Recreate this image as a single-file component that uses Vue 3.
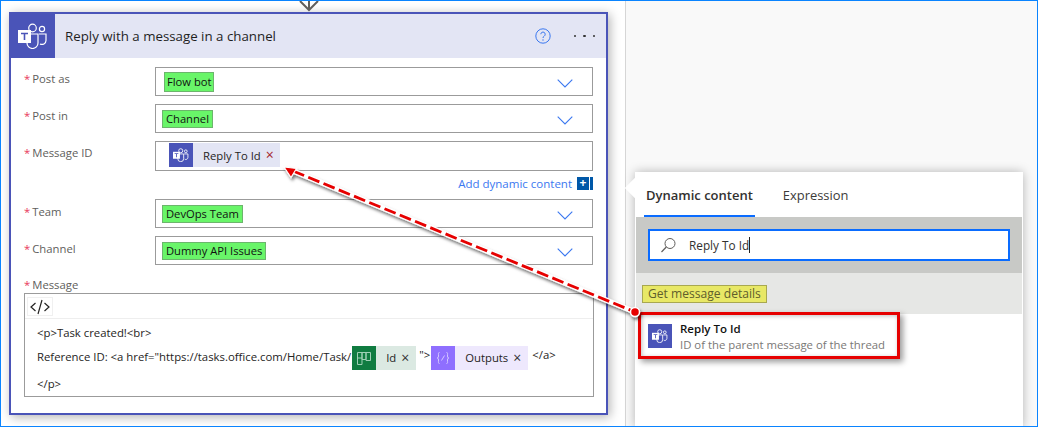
<script setup>
const rowsTop = [
  { label: 'Post as', token: 'Flow bot', cls: 'tk-a' },
  { label: 'Post in', token: 'Channel', cls: 'tk-b' }
]
const rowsBottom = [
  { label: 'Team', token: 'DevOps Team', cls: 'tk-b' },
  { label: 'Channel', token: 'Dummy API Issues', cls: 'tk-b' }
]
</script>

<template>
  <div class="frame">
    <section class="canvas">
      <svg class="connector" width="22" height="11" viewBox="0 0 22 11">
        <path d="M2 0l9 9 9-9M11 0v9" fill="none" stroke="#605e5c" stroke-width="2" />
      </svg>
      <article class="card">
        <header class="card-head">
          <div class="head-icon">
            <svg width="30" height="26" viewBox="0 0 30 26">
              <circle cx="14.5" cy="5" r="3.8" fill="none" stroke="#fff" stroke-width="1.2" />
              <circle cx="24" cy="6" r="2.6" fill="none" stroke="#fff" stroke-width="1.2" />
              <path d="M9 11h11v9a5.5 5.5 0 0 1-11 0zM21 11h7v6.5a4 4 0 0 1-6 3.4" fill="none" stroke="#fff" stroke-width="1.2" />
              <rect x="0" y="7" width="13" height="13" fill="#fff" />
              <path d="M3 9.8h7v1.5H7.3V17H5.7v-5.7H3z" fill="#4a54b8" />
            </svg>
          </div>
          <h1 class="head-title">Reply with a message in a channel</h1>
          <svg class="help" width="16" height="16" viewBox="0 0 16 16">
            <circle cx="8" cy="8" r="7.2" fill="none" stroke="#3b78f0" stroke-width="1" />
            <path d="M5.8 6.2a2.2 2.2 0 1 1 3.4 1.9c-.8.5-1.2.9-1.2 1.9" fill="none" stroke="#3b78f0" stroke-width="1" />
            <circle cx="8" cy="12" r=".7" fill="#3b78f0" />
          </svg>
          <div class="dots"><i></i><i></i><i></i></div>
        </header>

        <div class="form">
          <div v-for="r in rowsTop" :key="r.label" class="row">
            <label class="lbl"><b>*</b>{{ r.label }}</label>
            <div class="field">
              <span class="hl" :class="r.cls">{{ r.token }}</span>
              <svg class="chev" width="16" height="9" viewBox="0 0 16 9"><path d="M.7.7L8 8l7.3-7.3" fill="none" stroke="#3b78f0" stroke-width="1.1" /></svg>
            </div>
          </div>

          <div class="row row-id">
            <label class="lbl"><b>*</b>Message ID</label>
            <div class="field field-id">
              <span class="chip chip-teams">
                <span class="chip-ico teams">
                  <svg width="16" height="14" viewBox="0 0 30 26">
                    <circle cx="14.5" cy="5" r="3.8" fill="none" stroke="#fff" stroke-width="1.6" />
                    <circle cx="24" cy="6" r="2.6" fill="none" stroke="#fff" stroke-width="1.6" />
                    <path d="M9 11h11v9a5.5 5.5 0 0 1-11 0zM21 11h7v6.5a4 4 0 0 1-6 3.4" fill="none" stroke="#fff" stroke-width="1.6" />
                    <rect x="0" y="7" width="13" height="13" fill="#fff" />
                    <path d="M3 9.8h7v1.5H7.3V17H5.7v-5.7H3z" fill="#4a54b8" />
                  </svg>
                </span>
                <span class="chip-text">Reply To Id</span>
                <span class="chip-x x-red">×</span>
              </span>
            </div>
          </div>

          <div class="add-row">
            <span class="add-link">Add dynamic content</span>
            <span class="add-btn">+</span>
            <span class="add-strip"></span>
          </div>

          <div v-for="r in rowsBottom" :key="r.label" class="row row-low">
            <label class="lbl"><b>*</b>{{ r.label }}</label>
            <div class="field">
              <span class="hl" :class="r.cls">{{ r.token }}</span>
              <svg class="chev" width="16" height="9" viewBox="0 0 16 9"><path d="M.7.7L8 8l7.3-7.3" fill="none" stroke="#3b78f0" stroke-width="1.1" /></svg>
            </div>
          </div>

          <label class="lbl lbl-msg"><b>*</b>Message</label>
          <div class="editor">
            <div class="toolbar">
              <span class="code-btn">
                <svg width="22" height="16" viewBox="0 0 22 16">
                  <path d="M6.5 4L2 8l4.5 4M15.5 4L20 8l-4.5 4M13 1L9 15" fill="none" stroke="#252423" stroke-width="1.2" />
                </svg>
              </span>
            </div>
            <div class="code">
              <p class="ln ln1">&lt;p&gt;Task created!&lt;br&gt;</p>
              <div class="ln ln2">
                <span class="ref">Reference ID: &lt;a href="https://tasks.office.com/Home/Task/</span>
                <span class="chip chip-planner">
                  <span class="chip-ico planner">
                    <svg width="14" height="14" viewBox="0 0 14 14">
                      <path d="M.5 1.5h4.5v12H.5zM5 1.5h4v7H5zM9 1.5h4.500v8H9zM.5 7h4.500" fill="none" stroke="#9fd0b6" stroke-width="1" />
                    </svg>
                  </span>
                  <span class="chip-text">Id</span>
                  <span class="chip-x">×</span>
                </span>
                <span class="quote">"&gt;</span>
                <span class="chip chip-expr">
                  <span class="chip-ico expr">
                    <svg width="14" height="14" viewBox="0 0 14 14">
                      <path d="M3.500 1.500C2 1.500 2.500 3 2.500 5S1.500 7 1 7c.5 0 1.500 0 1.500 2s-.5 3.500 1 3.500M10.500 1.500c1.500 0 1 1.500 1 3.500s1 2 1.500 2c-.5 0-1.500 0-1.500 2s.5 3.500-1 3.500M5.500 9.500L8.500 4.500" fill="none" stroke="#d5c8ff" stroke-width="1" />
                    </svg>
                  </span>
                  <span class="chip-text">Outputs</span>
                  <span class="chip-x">×</span>
                </span>
                <span class="close-a">&lt;/a&gt;</span>
              </div>
              <p class="ln ln3">&lt;/p&gt;</p>
            </div>
          </div>
        </div>
      </article>
    </section>

    <aside class="side">
      <div class="flyout">
        <span class="beak"></span>
        <nav class="tabs">
          <span class="tab active">Dynamic content</span>
          <span class="tab">Expression</span>
        </nav>
        <div class="search-band">
          <div class="search">
            <svg width="17" height="17" viewBox="0 0 17 17">
              <circle cx="10" cy="6.500" r="5" fill="none" stroke="#605e5c" stroke-width="1" />
              <path d="M6.300 10L1.500 15" stroke="#605e5c" stroke-width="1.200" />
            </svg>
            <span class="search-text">Reply To Id</span>
            <span class="caret"></span>
          </div>
        </div>
        <div class="group-band"><span class="group-tag">Get message details</span></div>
        <div class="result">
          <span class="chip-ico teams">
            <svg width="16" height="14" viewBox="0 0 30 26">
              <circle cx="14.5" cy="5" r="3.800" fill="none" stroke="#fff" stroke-width="1.600" />
              <circle cx="24" cy="6" r="2.600" fill="none" stroke="#fff" stroke-width="1.600" />
              <path d="M9 11h11v9a5.500 5.500 0 0 1-11 0zM21 11h7v6.500a4 4 0 0 1-6 3.400" fill="none" stroke="#fff" stroke-width="1.600" />
              <rect x="0" y="7" width="13" height="13" fill="#fff" />
              <path d="M3 9.800h7v1.500H7.300V17H5.700v-5.700H3z" fill="#4a54b8" />
            </svg>
          </span>
          <div class="result-text">
            <strong>Reply To Id</strong>
            <small>ID of the parent message of the thread</small>
          </div>
        </div>
      </div>
    </aside>

    <div class="red-box"></div>
    <svg class="annot" width="1038" height="427" viewBox="0 0 1038 427">
      <defs>
        <filter id="sh" x="-5%" y="-20%" width="110%" height="140%">
          <feDropShadow dx="1.500" dy="2.500" stdDeviation="1.800" flood-color="#000" flood-opacity=".55" />
        </filter>
      </defs>
      <g filter="url(#sh)">
        <path d="M292 170.500L635 312" stroke="#fff" stroke-width="5.500" />
        <path d="M293 171L635 312" stroke="#e60000" stroke-width="2.800" stroke-dasharray="12 4.500" />
        <path d="M284 167L296.500 168.500L291 177.500z" fill="#e60000" stroke="#fff" stroke-width="1.200" />
        <circle cx="635" cy="312" r="4.500" fill="#e60000" stroke="#fff" stroke-width="1.500" />
      </g>
    </svg>
  </div>
</template>

<style>
html, body { margin: 0; padding: 0; }
</style>

<style scoped>
.frame {
  position: relative;
  display: flex;
  box-sizing: border-box;
  width: 1038px;
  height: 427px;
  overflow: hidden;
  background: #fff;
  border: 1px solid #0a84ff;
  font-family: "Open Sans", "Noto Sans", sans-serif;
  color: #252423;
}
.canvas {
  position: relative;
  box-sizing: border-box;
  width: 625px;
  padding: 11px 0 0 8px;
  border-right: 1px solid #d6d6d6;
  background: #fff;
}
.connector { position: absolute; left: 297px; top: 0; }
.card {
  box-sizing: border-box;
  width: 599px;
  height: 403px;
  border: 2px solid #4a54b8;
  box-shadow: 2px 2px 10px rgba(0, 0, 0, .3);
  background: #fff;
}
.card-head {
  display: flex;
  align-items: center;
  height: 44px;
  background: #e3e5f4;
}
.head-icon {
  display: flex;
  align-items: center;
  justify-content: center;
  width: 44px;
  height: 44px;
  background: #4a54b8;
}
.head-title {
  margin: 0 0 0 10px;
  flex: 1;
  font-size: 13.3px;
  font-weight: 400;
  color: #1f1f1f;
}
.help { margin-right: 23px; }
.dots { display: flex; gap: 7px; margin-right: 11px; }
.dots i { width: 2.500px; height: 2.500px; border-radius: 50%; background: #333; }

.form { padding: 9px 13px 0 13px; }
.row { display: flex; height: 29px; margin-bottom: 8px; }
.lbl {
  display: block;
  width: 131px;
  padding-top: 4px;
  font-size: 11.300px;
  line-height: 16px;
  color: #605e5c;
}
.row-low .lbl { padding-top: 5px; }
.lbl b { margin-right: 2px; font-weight: 400; color: #e8385a; }
.field {
  position: relative;
  display: flex;
  align-items: center;
  box-sizing: border-box;
  flex: 1;
  height: 29px;
  border: 1px solid #9b9b9b;
}
.hl {
  font-size: 11.200px;
  line-height: 16px;
  color: #111;
  background: #69f569;
  border: 1px solid #6cb56c;
}
.tk-a { margin-left: 8px; padding: 1px 2px; }
.tk-b { margin-left: 6px; padding: 0 3px; }
.chev { position: absolute; right: 19px; top: 11px; }
.row-id { height: 30px; margin-bottom: 0; }
.field-id { height: 30px; padding-left: 13px; align-items: flex-start; padding-top: 1px; }

.chip { display: inline-flex; align-items: center; height: 24px; font-size: 11.300px; color: #252423; }
.chip-ico {
  display: flex;
  align-items: center;
  justify-content: center;
  width: 24px;
  height: 24px;
  flex: none;
}
.teams { background: #4a54b8; }
.planner { background: #107c41; }
.expr { background: #8f6fff; }
.chip-teams { background: #e3e5f4; width: 111px; }
.chip-planner { background: #dbe9e2; width: 64px; margin-left: 1px; }
.chip-expr { background: #eee8fd; width: 97px; }
.chip-text { margin-left: 10px; white-space: nowrap; }
.chip-x { margin-left: 5px; font-size: 14px; line-height: 14px; color: #333; }
.x-red { color: #a4262c; }

.add-row {
  display: flex;
  align-items: center;
  justify-content: flex-end;
  height: 14px;
  margin: 5px 0 9px;
  font-size: 11.500px;
  color: #3b78f0;
}
.add-link { margin-right: 5px; }
.add-btn {
  width: 12px;
  height: 13px;
  background: #0058a8;
  color: #fff;
  font-size: 12px;
  font-weight: 700;
  line-height: 12px;
  text-align: center;
}
.add-strip { width: 3px; height: 13px; margin-left: 1px; background: #0058a8; }

.lbl-msg { width: auto; box-sizing: border-box; height: 20px; padding-top: 4px; }
.editor {
  box-sizing: border-box;
  width: 570px;
  height: 104px;
  border: 1px solid #9b9b9b;
  font-size: 11.350px;
  color: #252423;
}
.toolbar {
  box-sizing: border-box;
  height: 25px;
  padding: 3px 0 0 2px;
  border-bottom: 1px solid #eee;
}
.code-btn {
  display: flex;
  align-items: center;
  justify-content: center;
  box-sizing: border-box;
  width: 26px;
  height: 19px;
  border: 1px solid #f0f0f0;
}
.code { padding: 6px 0 0 12px; }
.ln { margin: 0; line-height: 16px; white-space: nowrap; }
.ln2 { display: flex; align-items: center; height: 24px; margin: 5px 0 0 0; }
.ln3 { margin-top: 6px; }
.quote { margin: -6px 1px 0 3px; }
.close-a { margin: -6px 0 0 4px; }
.ref { margin-top: -2px; }

.side { position: relative; flex: 1; background: #f9f9f9; }
.flyout {
  position: relative;
  box-sizing: border-box;
  width: 388px;
  height: 256px;
  margin: 171px 0 0 9px;
  background: #fff;
  box-shadow: 0 0 10px rgba(0, 0, 0, .28);
}
.beak {
  position: absolute;
  left: -10px;
  top: 6px;
  width: 20px;
  height: 20px;
  background: #fff;
  transform: rotate(45deg) scale(.72);
}
.tabs { position: relative; display: flex; height: 45px; padding-left: 9px; font-size: 13px; }
.tab { box-sizing: border-box; height: 45px; padding: 14px 2px 0; color: #3b3a39; margin-right: 26px; font-size: 12.900px; }
.tab.active { font-weight: 600; font-size: 13px; color: #323130; border-bottom: 2px solid #0a6cff; }
.search-band { box-sizing: border-box; height: 56px; margin: 0 1px; padding: 12px 12px; background: #c8c9c6; }
.search {
  display: flex;
  align-items: center;
  box-sizing: border-box;
  height: 32px;
  padding-left: 10px;
  background: #fff;
  border: 2px solid #0a6cff;
  font-size: 11.800px;
}
.search-text { margin-left: 12px; color: #323130; }
.caret { width: 1px; height: 16px; background: #222; }
.group-band { box-sizing: border-box; height: 41px; margin: 0 1px; padding: 12px 0 0 6px; background: #e6e7e5; }
.group-tag {
  display: block;
  width: fit-content;
  padding: 0 5px;
  font-size: 12.100px;
  line-height: 16px;
  color: #605e2c;
  background: #e8e866;
  border: 1px solid #a8a850;
}
.result { display: flex; padding: 10px 0 0 13px; }
.result-text { display: flex; flex-direction: column; margin: -3px 0 0 8px; }
.result-text strong { font-size: 11.500px; font-weight: 600; line-height: 15px; color: #111; }
.result-text small { font-size: 11.350px; line-height: 17px; color: #7a7876; }

.red-box {
  position: absolute;
  left: 637px;
  top: 311px;
  box-sizing: border-box;
  width: 262px;
  height: 47px;
  border: 3px solid #e60000;
  box-shadow: 3px 3px 6px rgba(0, 0, 0, .4), inset 1px 1px 4px rgba(0, 0, 0, .25);
}
.annot { position: absolute; left: -1px; top: -1px; pointer-events: none; }
</style>
